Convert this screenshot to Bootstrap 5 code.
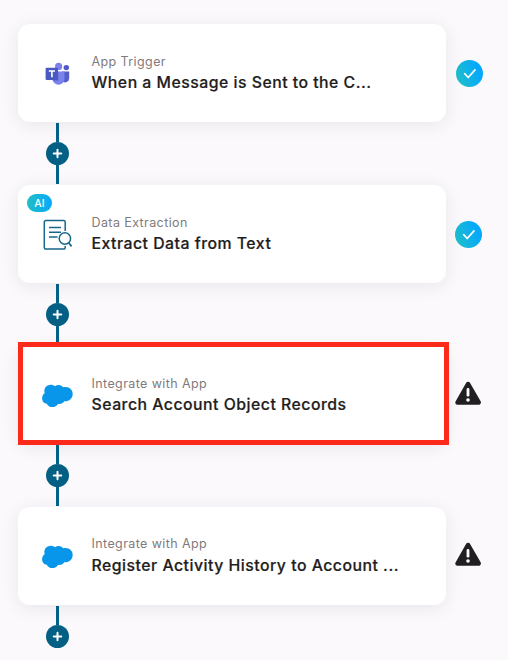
<!DOCTYPE html>
<html lang="en">
<head>
<meta charset="utf-8">
<meta name="viewport" content="width=device-width, initial-scale=1">
<title>Workflow</title>
<link href="https://cdn.jsdelivr.net/npm/bootstrap@5.3.0/dist/css/bootstrap.min.css" rel="stylesheet">
<style>
body{background:#fbf9fc;font-family:Inter,"Liberation Sans",sans-serif;overflow:hidden}
.flow{padding:24px 0 0 18px;height:660px;overflow:hidden}
.step-card{width:428px;height:98px;border-radius:12px;box-shadow:0 3px 18px rgba(40,30,50,.085);padding-left:24px}
.step-icon{width:32px;height:32px;margin-top:1px}
.step-text{margin-left:17.5px}
.step-kind{font-size:12.5px;line-height:18px;letter-spacing:.4px;color:#7f7b7b}
.step-name{font-size:15.8px;line-height:20px;letter-spacing:.5px;font-weight:500;-webkit-text-stroke:.2px #1f1d20;color:#1f1d20;margin:2px 0 1px}
.link-line{width:3px;background:#04628a}
.joint{height:63px;width:23px;margin-left:28px;padding:1px 0}
.plus{width:23px;height:23px;background:#045f84}
.state{margin-left:10px;width:27px;height:27px}
.state-near{margin-left:9px}
.state-warn{margin-bottom:4px}
.ai{left:9px;top:9px;width:25px;height:18px;border-radius:9px;font-size:10.5px;font-weight:500;line-height:19px;background:linear-gradient(90deg,#1fbfc6,#08a8fb)}
.marked{inset:-4px -3px -1px 0;border:5px solid #fb2a1a}
.high{margin-top:-1px}
.high .step-name{margin-top:3px}
</style>
<script src="https://cdn.jsdelivr.net/npm/bootstrap@5.3.0/dist/js/bootstrap.bundle.min.js"></script>
</head>
<body>
<svg width="0" height="0" class="position-absolute" aria-hidden="true">
  <defs>
    <linearGradient id="aqua" x1="0" y1=".7" x2="1" y2=".3"><stop stop-color="#20bfc8"/><stop offset=".8" stop-color="#06a9fa"/></linearGradient>
    <symbol id="check" viewBox="0 0 27 27"><circle cx="13.5" cy="13.5" r="13.5" fill="url(#aqua)"/><path d="M8.7 13.7l3.5 3.8 6.8-7.6" fill="none" stroke="#fff" stroke-width="1.7" stroke-linecap="round" stroke-linejoin="round"/></symbol>
    <symbol id="warn" viewBox="0 0 27 27"><path d="M13 4L23.7 22.5H2.5z" fill="#211f22" stroke="#211f22" stroke-width="4.5" stroke-linejoin="round"/><path d="M13 9.4v5.8" stroke="#fff" stroke-width="2.8" stroke-linecap="round"/><circle cx="13" cy="20" r="1.8" fill="#fff"/></symbol>
    <symbol id="add" viewBox="0 0 23 23"><path d="M11.5 7.7v7.6M7.7 11.5h7.6" stroke="#fff" stroke-width="2" stroke-linecap="round"/></symbol>
    <symbol id="cloud" viewBox="0 0 32 32"><path fill="#0896ea" d="M13 6.3c2.6-2 6.400-1.500 8 1 4.900-1.600 9.700 1.500 9.700 6.400 0 5-4.200 8-8.500 7.500-1.300 2.300-3.900 3.100-6 2.500-2.500 4.600-9.700 4.400-11.300 0C1.400 23.600-.6 20 .3 16.700c.4-1.600 1.400-2.700 2.400-3.400C1.500 9.600 3.400 5.300 7.600 4.900c2.100-.2 4.100.4 5.400 1.400z"/></symbol>
  </defs>
</svg>
<main class="flow d-flex flex-column">
  <section class="d-flex align-items-center flex-shrink-0">
    <div class="step-card bg-white d-flex align-items-center position-relative">
      <svg class="step-icon" viewBox="0 0 32 32"><circle cx="24.3" cy="9.6" r="2.7" fill="#5059c9"/><path d="M20 13.5h7.2v6.7a4.2 4.2 0 0 1-7.2 2.9z" fill="#535dcb"/><circle cx="16.6" cy="8.4" r="3.6" fill="#7b83eb"/><path d="M10.5 13.5h12v7.2a6 6 0 0 1-12 0z" fill="#7b83eb"/><path d="M10.5 13.5h5.8v9.3h-5.4z" fill="#5c66cf"/><rect x="3.6" y="9.7" width="12.4" height="12.4" rx="1.1" fill="#4a58c2"/><path d="M6.8 13h6.2M9.9 13v6.3" stroke="#fff" stroke-width="1.6"/></svg>
      <div class="step-text"><div class="step-kind">App Trigger</div><div class="step-name text-nowrap">When a Message is Sent to the C...</div></div>
    </div>
    <svg class="state"><use href="#check"/></svg>
  </section>
  <div class="joint d-flex flex-column align-items-center flex-shrink-0"><span class="link-line flex-fill"></span><svg class="plus rounded-circle"><use href="#add"/></svg><span class="link-line flex-fill"></span></div>
  <section class="d-flex align-items-center flex-shrink-0">
    <div class="step-card bg-white d-flex align-items-center position-relative">
      <span class="ai position-absolute text-white text-center">AI</span>
      <svg class="step-icon" viewBox="0 0 32 32" fill="none" stroke="#17678a"><path d="M23.2 12V3a1.5 1.5 0 0 0-1.5-1.5H3.8A1.5 1.5 0 0 0 2.3 3v25.6a1.5 1.5 0 0 0 1.5 1.5h17.9a1.5 1.5 0 0 0 1.5-1.5V27" stroke-width="1.5"/><path d="M7 8.5h12M7 13.2h12M7 18h8.5" stroke-width="1.4"/><circle cx="22.9" cy="19.5" r="5.7" fill="#fff" stroke-width="1.5"/><path d="M26.7 23.8l2.8 3.6" stroke-width="1.8"/></svg>
      <div class="step-text"><div class="step-kind">Data Extraction</div><div class="step-name text-nowrap">Extract Data from Text</div></div>
    </div>
    <svg class="state state-near"><use href="#check"/></svg>
  </section>
  <div class="joint d-flex flex-column align-items-center flex-shrink-0"><span class="link-line flex-fill"></span><svg class="plus rounded-circle"><use href="#add"/></svg><span class="link-line flex-fill"></span></div>
  <section class="d-flex align-items-center flex-shrink-0">
    <div class="step-card bg-white d-flex align-items-center position-relative">
      <span class="marked position-absolute bg-white"></span>
      <svg class="step-icon position-relative"><use href="#cloud"/></svg>
      <div class="step-text position-relative"><div class="step-kind">Integrate with App</div><div class="step-name text-nowrap">Search Account Object Records</div></div>
    </div>
    <svg class="state state-near state-warn"><use href="#warn"/></svg>
  </section>
  <div class="joint d-flex flex-column align-items-center flex-shrink-0"><span class="link-line flex-fill"></span><svg class="plus rounded-circle"><use href="#add"/></svg><span class="link-line flex-fill"></span></div>
  <section class="d-flex align-items-center flex-shrink-0">
    <div class="step-card bg-white d-flex align-items-center position-relative">
      <svg class="step-icon"><use href="#cloud"/></svg>
      <div class="step-text high"><div class="step-kind">Integrate with App</div><div class="step-name text-nowrap">Register Activity History to Account ...</div></div>
    </div>
    <svg class="state state-near state-warn"><use href="#warn"/></svg>
  </section>
  <div class="joint d-flex flex-column align-items-center flex-shrink-0"><span class="link-line flex-fill"></span><svg class="plus rounded-circle"><use href="#add"/></svg><span class="flex-fill"></span></div>
</main>
</body>
</html>
